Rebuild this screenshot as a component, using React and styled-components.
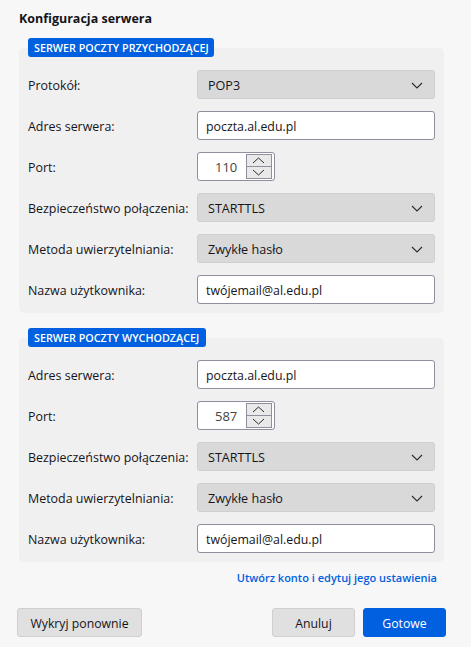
import React from "react";
import styled, { createGlobalStyle } from "styled-components";

const Global = createGlobalStyle`
  html, body { margin: 0; padding: 0; background: #f7f7f7; }
  body { font-family: "Open Sans", "Noto Sans", sans-serif; color: #1a1a1a; }
  * { box-sizing: border-box; }
`;

const Page = styled.div`
  width: 471px;
  height: 647px;
  padding: 10px 25px 10px 17px;
  display: flex;
  flex-direction: column;
  overflow: hidden;
`;
const Title = styled.h1`
  margin: 0 0 0 2px;
  height: 17px;
  line-height: 17px;
  font-size: 12.5px;
  font-weight: 700;
  color: #15141a;
`;
const Section = styled.section`
  margin: ${(p) => p.$top}px 0 0 2px;
  width: 425px;
`;
const Badge = styled.div`
  position: relative;
  width: ${(p) => p.$width}px;
  height: 19px;
  margin-left: 9px;
  margin-bottom: -9px;
  padding-left: 6px;
  background: #0060df;
  color: #fff;
  border-radius: 3px;
  font-size: 10.78px;
  font-weight: 600;
  line-height: 19px;
  white-space: nowrap;
`;
const Panel = styled.div`
  background: #f0f0f0;
  border-radius: 5px;
  padding: 22px 9px 9px 9px;
  display: flex;
  flex-direction: column;
  gap: 12px;
`;
const Row = styled.div`
  display: flex;
  align-items: center;
  height: 29px;
`;
const Label = styled.label`
  width: 169px;
  flex: none;
  padding-top: 2px;
  font-size: 12.45px;
  color: #15141a;
  white-space: nowrap;
`;
const Select = styled.div`
  width: 238px;
  height: 29px;
  background: #d9d9d9;
  border: 1px solid #cfcfcf;
  border-radius: 3px;
  display: flex;
  align-items: center;
  justify-content: space-between;
  padding: 1px 11px 0 10px;
  font-size: 12.6px;
  color: #15141a;
`;
const Input = styled.div`
  width: 238px;
  height: 29px;
  background: #fff;
  border: 1px solid #8f8f9d;
  border-radius: 3px;
  display: flex;
  align-items: center;
  padding: 1px 8px 0;
  font-size: 12.35px;
  color: #15141a;
`;
const NumberBox = styled.div`
  width: 78px;
  height: 29px;
  background: #fff;
  border: 1px solid #8f8f9d;
  border-radius: 3px;
  display: flex;
  align-items: center;
  justify-content: space-between;
  padding: 1px;
  font-size: 13px;
  color: #444;
`;
const NumberValue = styled.span`
  width: 48px;
  padding: 1px 0 0 16px;
`;
const Spinner = styled.div`
  width: 27px;
  height: 25px;
  display: flex;
  flex-direction: column;
  border: 1px solid #8f8f9d;
  background: #e9e9e9;
  margin-right: 1px;
`;
const SpinButton = styled.div`
  flex: 1;
  display: flex;
  align-items: center;
  justify-content: center;
  & + & { border-top: 1px solid #8f8f9d; }
`;
const LinkRow = styled.div`
  display: flex;
  justify-content: flex-end;
  margin-top: 7px;
  padding-right: 9px;
  height: 18px;
  line-height: 18px;
`;
const ActionLink = styled.a`
  color: #0060df;
  font-size: 11px;
  font-weight: 600;
`;
const Footer = styled.div`
  margin-top: 21px;
  display: flex;
  align-items: center;
  gap: 8px;
`;
const Button = styled.button`
  height: 29px;
  width: ${(p) => p.$width}px;
  margin-right: ${(p) => (p.$spaced ? "auto" : 0)};
  padding: 2px 0 0;
  font: inherit;
  font-size: 12.25px;
  border-radius: 3px;
  border: 1px solid ${(p) => (p.$primary ? "#0060df" : "#cfcfcf")};
  background: ${(p) => (p.$primary ? "#0060df" : "#e0e0e0")};
  color: ${(p) => (p.$primary ? "#fff" : "#15141a")};
`;

const Chevron = () => (
  <svg width="12" height="7" viewBox="0 0 12 7" fill="none">
    <path d="M1 1l5 5 5-5" stroke="#2b2a33" strokeWidth="1.1" />
  </svg>
);
const Small = ({ up }) => (
  <svg width="13" height="7" viewBox="0 0 13 7" fill="none">
    <path d={up ? "M1 6l5.5-5 5.5 5" : "M1 1l5.5 5 5.5-5"} stroke="#2b2a33" strokeWidth="1" />
  </svg>
);

const Field = ({ label, children }) => (
  <Row>
    <Label>{label}</Label>
    {children}
  </Row>
);
const Dropdown = ({ value }) => (
  <Select>
    {value}
    <Chevron />
  </Select>
);
const Num = ({ value }) => (
  <NumberBox>
    <NumberValue>{value}</NumberValue>
    <Spinner>
      <SpinButton><Small up /></SpinButton>
      <SpinButton><Small /></SpinButton>
    </Spinner>
  </NumberBox>
);

const common = (port) => (
  <>
    <Field label="Adres serwera:"><Input>poczta.al.edu.pl</Input></Field>
    <Field label="Port:"><Num value={port} /></Field>
    <Field label="Bezpieczeństwo połączenia:"><Dropdown value="STARTTLS" /></Field>
    <Field label="Metoda uwierzytelniania:"><Dropdown value="Zwykłe hasło" /></Field>
    <Field label="Nazwa użytkownika:"><Input>twójemail@al.edu.pl</Input></Field>
  </>
);

export default function App() {
  return (
    <Page>
      <Global />
      <Title>Konfiguracja serwera</Title>
      <Section $top={11}>
        <Badge $width={186}>SERWER POCZTY PRZYCHODZĄCEJ</Badge>
        <Panel>
          <Field label="Protokół:"><Dropdown value="POP3" /></Field>
          {common("110")}
        </Panel>
      </Section>
      <Section $top={15}>
        <Badge $width={178}>SERWER POCZTY WYCHODZĄCEJ</Badge>
        <Panel>{common("587")}</Panel>
      </Section>
      <LinkRow><ActionLink>Utwórz konto i edytuj jego ustawienia</ActionLink></LinkRow>
      <Footer>
        <Button $width={125} $spaced>Wykryj ponownie</Button>
        <Button $width={83}>Anuluj</Button>
        <Button $width={83} $primary>Gotowe</Button>
      </Footer>
    </Page>
  );
}
